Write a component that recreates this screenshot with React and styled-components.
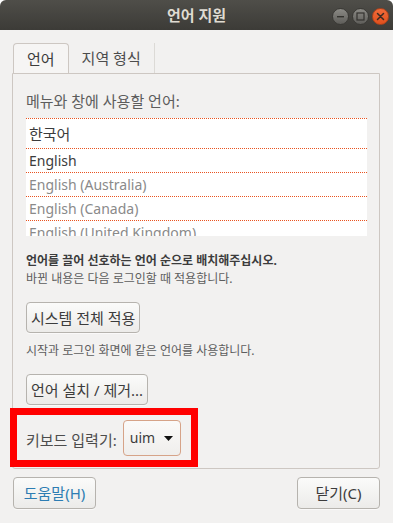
import React from "react";
import styled, { createGlobalStyle } from "styled-components";

const GlobalStyle = createGlobalStyle`
  html, body { margin: 0; padding: 0; background: #ffffff; }
  * { box-sizing: border-box; }
`;

const FONT = `"Noto Sans", "Noto Sans CJK KR", sans-serif`;

const Window = styled.div`
  width: 393px;
  height: 523px;
  display: flex;
  flex-direction: column;
  background: #f2f1f0;
  border-radius: 6px 6px 0 0;
  overflow: hidden;
  font-family: ${FONT};
  color: #3c3c3c;
`;

const TitleBar = styled.div`
  height: 30px;
  flex: none;
  display: grid;
  grid-template-columns: 1fr auto 1fr;
  align-items: center;
  background: linear-gradient(to bottom, #4f4e49, #3c3b37);
`;

const Title = styled.div`
  grid-column: 2;
  font-size: 15px;
  font-weight: 700;
  color: #dfdbd2;
  line-height: 30px;
`;

const Controls = styled.div`
  grid-column: 3;
  justify-self: end;
  display: flex;
  gap: 3px;
  padding-right: 4px;
  padding-top: 2px;
`;

const CircleBtn = styled.div`
  width: 17px;
  height: 17px;
  border-radius: 50%;
  display: flex;
  align-items: center;
  justify-content: center;
  border: 1px solid ${(p) => (p.$close ? "#b0421a" : "#3a3935")};
  background: ${(p) =>
    p.$close
      ? "linear-gradient(to bottom, #f26b3a, #e0501d)"
      : "linear-gradient(to bottom, #8b8a85, #5e5d59)"};
`;

const Body = styled.div`
  flex: 1;
  display: flex;
  flex-direction: column;
  padding: 13px 13px 0 12px;
`;

const Tabs = styled.div`
  display: flex;
  height: 30px;
  padding-left: 1px;
`;

const Tab = styled.div`
  display: flex;
  align-items: center;
  padding: 0 13px;
  font-size: 15px;
  line-height: 20px;
  color: ${(p) => (p.$active ? "#3c3c3c" : "#4c4c4c")};
  background: ${(p) => (p.$active ? "#f6f5f4" : "transparent")};
  border: ${(p) => (p.$active ? "1px solid #cdc7c2" : "none")};
  border-bottom: none;
  border-right: ${(p) => (p.$active ? "1px solid #cdc7c2" : "1px solid #dcdad6")};
  border-radius: ${(p) => (p.$active ? "4px 4px 0 0" : "0")};
`;

const Panel = styled.div`
  height: 396px;
  flex: none;
  border: 1px solid #cdc7c2;
  border-radius: 0 0 3px 3px;
  padding: 0 12px 0 13px;
  display: flex;
  flex-direction: column;
  align-items: flex-start;
`;

const Label = styled.div`
  margin-top: 17px;
  font-size: 15px;
  line-height: 20px;
  color: #5d5d5d;
`;

const List = styled.div`
  margin-top: 7px;
  width: 100%;
  height: 118px;
  overflow: hidden;
  background: #ffffff;
`;

const Row = styled.div`
  height: ${(p) => p.$h}px;
  border-top: 1px dotted #e95420;
  padding-left: 3px;
  display: flex;
  align-items: center;
  font-size: ${(p) => p.$size}px;
  line-height: 20px;
  white-space: nowrap;
  color: ${(p) => (p.$dim ? "#8a8a8a" : "#3c3c3c")};
`;

const Strong = styled.div`
  margin-top: 16px;
  font-size: 12px;
  line-height: 18px;
  font-weight: 700;
  color: #3c3c3c;
`;

const Hint = styled.div`
  margin-top: ${(p) => p.$mt || 0}px;
  font-size: 12px;
  line-height: 18px;
  color: #5d5d5d;
`;

const Button = styled.div`
  margin-top: ${(p) => p.$mt || 0}px;
  height: ${(p) => p.$h || 31}px;
  width: ${(p) => (p.$w ? `${p.$w}px` : "auto")};
  padding: 0 4px;
  display: flex;
  align-items: center;
  justify-content: center;
  font-size: 15px;
  line-height: 20px;
  white-space: nowrap;
  color: ${(p) => p.$color || "#3c3c3c"};
  border: 1px solid #b6b3ae;
  border-radius: 4px;
  background: linear-gradient(to bottom, #fbfbfa, #ecebe9);
  box-shadow: 0 1px 0 rgba(255, 255, 255, 0.6);
`;

const KeyboardRow = styled.div`
  position: relative;
  margin-top: 15px;
  height: 36px;
  display: flex;
  align-items: center;
  gap: 6px;
`;

const KeyLabel = styled.div`
  font-size: 15px;
  line-height: 20px;
  color: #4c4c4c;
  padding-top: 4px;
`;

const Combo = styled.div`
  width: 58px;
  height: 36px;
  display: flex;
  align-items: center;
  gap: 9px;
  padding-left: 6px;
  font-size: 14px;
  line-height: 20px;
  color: #3c3c3c;
  border: 1px solid #d6a388;
  border-radius: 4px;
  background: linear-gradient(to bottom, #fbfaf9, #efeeec);
`;

const Highlight = styled.div`
  position: absolute;
  left: -16px;
  top: -12px;
  width: 188px;
  height: 59px;
  border: 7px solid #ff0000;
  pointer-events: none;
`;

const Footer = styled.div`
  margin-top: 8px;
  padding-left: 1px;
  display: flex;
  justify-content: space-between;
`;

const languages = [
  { name: "한국어", h: 30, size: 15, dim: false },
  { name: "English", h: 24, size: 14, dim: false },
  { name: "English (Australia)", h: 24, size: 14, dim: true },
  { name: "English (Canada)", h: 24, size: 14, dim: true },
  { name: "English (United Kingdom)", h: 24, size: 14, dim: true },
];

export default function App() {
  return (
    <>
      <GlobalStyle />
      <Window>
        <TitleBar>
          <Title>언어 지원</Title>
          <Controls>
            <CircleBtn>
              <svg width="9" height="9" viewBox="0 0 9 9">
                <rect x="1" y="4" width="7" height="1.4" fill="#34332f" />
              </svg>
            </CircleBtn>
            <CircleBtn>
              <svg width="9" height="9" viewBox="0 0 9 9">
                <rect x="1" y="1" width="7" height="7" fill="none" stroke="#34332f" strokeWidth="1.2" />
              </svg>
            </CircleBtn>
            <CircleBtn $close>
              <svg width="9" height="9" viewBox="0 0 9 9">
                <path d="M1.5 1.5 L7.5 7.5 M7.5 1.5 L1.5 7.5" stroke="#3a2a22" strokeWidth="1.5" strokeLinecap="round" />
              </svg>
            </CircleBtn>
          </Controls>
        </TitleBar>
        <Body>
          <Tabs>
            <Tab $active>언어</Tab>
            <Tab>지역 형식</Tab>
          </Tabs>
          <Panel>
            <Label>메뉴와 창에 사용할 언어:</Label>
            <List>
              {languages.map((l) => (
                <Row key={l.name} $h={l.h} $size={l.size} $dim={l.dim}>
                  {l.name}
                </Row>
              ))}
            </List>
            <Strong>언어를 끌어 선호하는 언어 순으로 배치해주십시오.</Strong>
            <Hint>바뀐 내용은 다음 로그인할 때 적용합니다.</Hint>
            <Button $mt={14}>시스템 전체 적용</Button>
            <Hint $mt={9}>시작과 로그인 화면에 같은 언어를 사용합니다.</Hint>
            <Button $mt={14}>언어 설치 / 제거...</Button>
            <KeyboardRow>
              <KeyLabel>키보드 입력기:</KeyLabel>
              <Combo>
                <span>uim</span>
                <svg width="9" height="5" viewBox="0 0 9 5">
                  <path d="M0 0 L9 0 L4.5 5 Z" fill="#111" />
                </svg>
              </Combo>
              <Highlight />
            </KeyboardRow>
          </Panel>
          <Footer>
            <Button $w={83} $h={32} $color="#2d7db3">도움말(H)</Button>
            <Button $w={83} $h={32}>닫기(C)</Button>
          </Footer>
        </Body>
      </Window>
    </>
  );
}
